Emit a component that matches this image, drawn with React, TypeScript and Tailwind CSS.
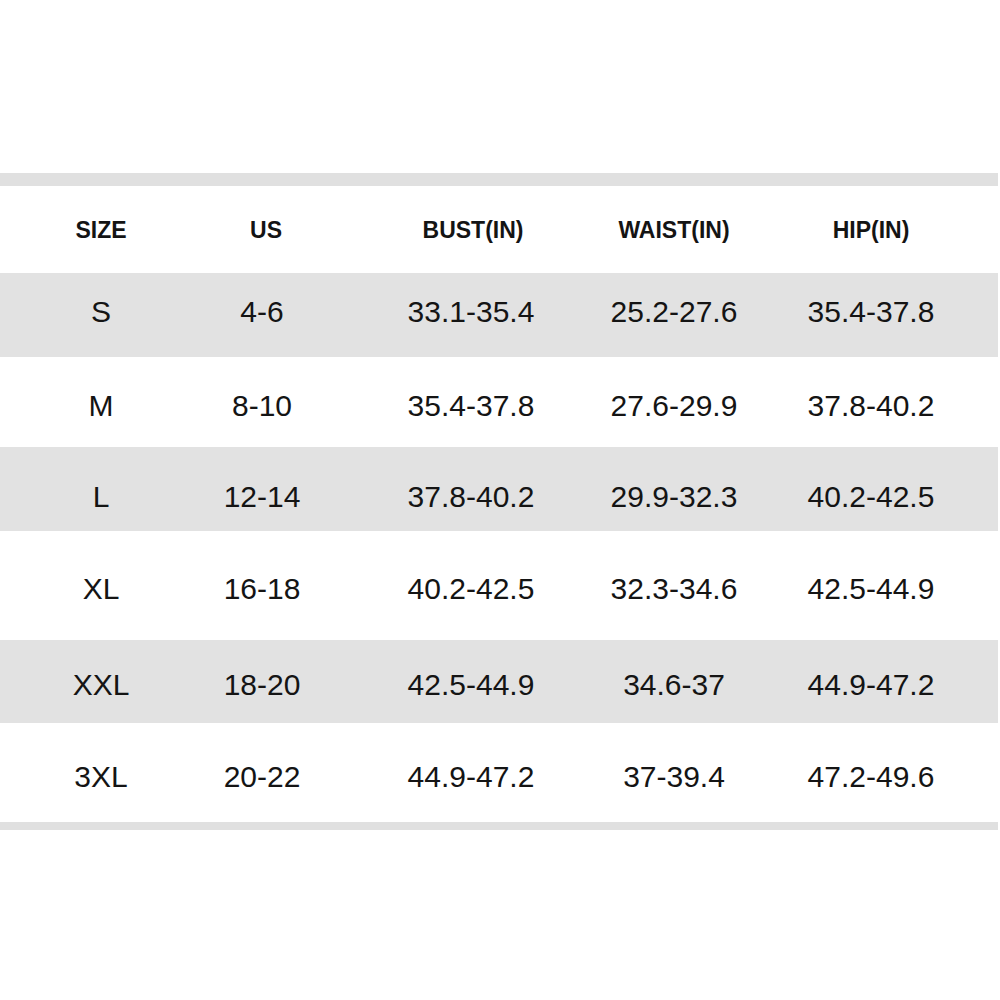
import React from 'react';

type Row = {
  cells: string[];
  h: string;
  bg: string;
  pad: string;
};

const rows: Row[] = [
  { cells: ['S', '4-6', '33.1-35.4', '25.2-27.6', '35.4-37.8'], h: 'h-[84px]', bg: 'bg-[#e2e2e2]', pad: 'pb-[6px]' },
  { cells: ['M', '8-10', '35.4-37.8', '27.6-29.9', '37.8-40.2'], h: 'h-[90px]', bg: 'bg-white', pad: 'pt-[7px]' },
  { cells: ['L', '12-14', '37.8-40.2', '29.9-32.3', '40.2-42.5'], h: 'h-[84px]', bg: 'bg-[#e2e2e2]', pad: 'pt-[16px]' },
  { cells: ['XL', '16-18', '40.2-42.5', '32.3-34.6', '42.5-44.9'], h: 'h-[109px]', bg: 'bg-white', pad: 'pt-[7px]' },
  { cells: ['XXL', '18-20', '42.5-44.9', '34.6-37', '44.9-47.2'], h: 'h-[83px]', bg: 'bg-[#e2e2e2]', pad: 'pt-[7px]' },
  { cells: ['3XL', '20-22', '44.9-47.2', '37-39.4', '47.2-49.6'], h: 'h-[99px]', bg: 'bg-white', pad: 'pt-[9px]' },
];

const headers = [
  { t: 'SIZE', cls: '' },
  { t: 'US', cls: 'pl-[8px]' },
  { t: 'BUST(IN)', cls: 'pl-[4px]' },
  { t: 'WAIST(IN)', cls: '' },
  { t: 'HIP(IN)', cls: '' },
];

const gridCols = 'grid grid-cols-[142px_180px_238px_168px_226px] pl-[30px]';

function App() {
  return (
    <div
      className="w-[1000px] h-[1000px] bg-white pt-[173px] text-[#141414]"
      style={{ fontFamily: '"Liberation Sans", Arial, sans-serif' }}
    >
      <div className="w-[998px]">
        <div className="h-[13px] bg-[#e0e0e0]" />

        <div className={`${gridCols} h-[87px] items-center`}>
          {headers.map((h) => (
            <div key={h.t} className={`flex justify-center text-[23px] font-bold leading-none pt-[2px] ${h.cls}`}>
              {h.t}
            </div>
          ))}
        </div>

        {rows.map((r) => (
          <div key={r.cells[0]} className={`${gridCols} ${r.h} ${r.bg} items-center`}>
            {r.cells.map((c, i) => (
              <div key={i} className={`flex justify-center text-[30px] leading-none whitespace-nowrap ${r.pad}`}>
                {c}
              </div>
            ))}
          </div>
        ))}

        <div className="h-[8px] bg-[#e0e0e0]" />
      </div>
    </div>
  );
}

export default App;
